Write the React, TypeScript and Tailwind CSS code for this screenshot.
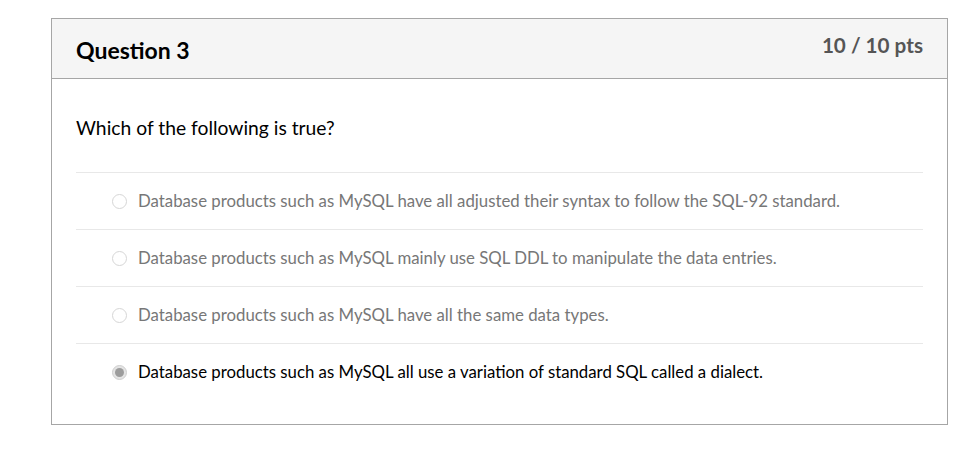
import React from 'react';

const answers = [
  { text: 'Database products such as MySQL have all adjusted their syntax to follow the SQL-92 standard.', picked: false },
  { text: 'Database products such as MySQL mainly use SQL DDL to manipulate the data entries.', picked: false },
  { text: 'Database products such as MySQL have all the same data types.', picked: false },
  { text: 'Database products such as MySQL all use a variation of standard SQL called a dialect.', picked: true },
];

const Radio = ({ picked }: { picked: boolean }) => (
  <span
    className={
      picked
        ? 'flex items-center justify-center w-[15px] h-[15px] rounded-full border border-[#cfcfcf] bg-[#e4e4e4] shrink-0'
        : 'flex items-center justify-center w-[15px] h-[15px] rounded-full border border-[#d6d6d6] bg-white shrink-0'
    }
  >
    {picked && <span className="w-[9px] h-[9px] rounded-full bg-[#9c9c9c]" />}
  </span>
);

const App = () => {
  return (
    <div className="w-[956px] h-[456px] bg-white pt-[18px] pl-[51px] font-['Lato','Liberation_Sans',sans-serif]">
      <div className="w-[897px] h-[407px] border border-[#a6a6a6] flex flex-col">
        <div className="h-[60px] bg-[#f5f5f5] border-b border-[#a6a6a6] flex justify-between px-6">
          <h3 className="text-[23px] font-bold text-black leading-none pt-[20px]">Question 3</h3>
          <span className="text-[20.7px] font-bold text-[#555] leading-none pt-[16px]">10 / 10 pts</span>
        </div>

        <div className="px-6 pt-[37px]">
          <p className="text-[19.3px] text-black leading-[24px] mb-[32px]">Which of the following is true?</p>

          <div className="flex flex-col">
            {answers.map((a, i) => (
              <div key={i} className="h-[57px] border-t border-[#e8e8e8] flex items-center gap-[11px] pl-[36px]">
                <Radio picked={a.picked} />
                <span className={a.picked ? 'text-[16.8px] text-black' : 'text-[16.8px] text-[#777]'}>{a.text}</span>
              </div>
            ))}
          </div>
        </div>
      </div>
    </div>
  );
};

export default App;
